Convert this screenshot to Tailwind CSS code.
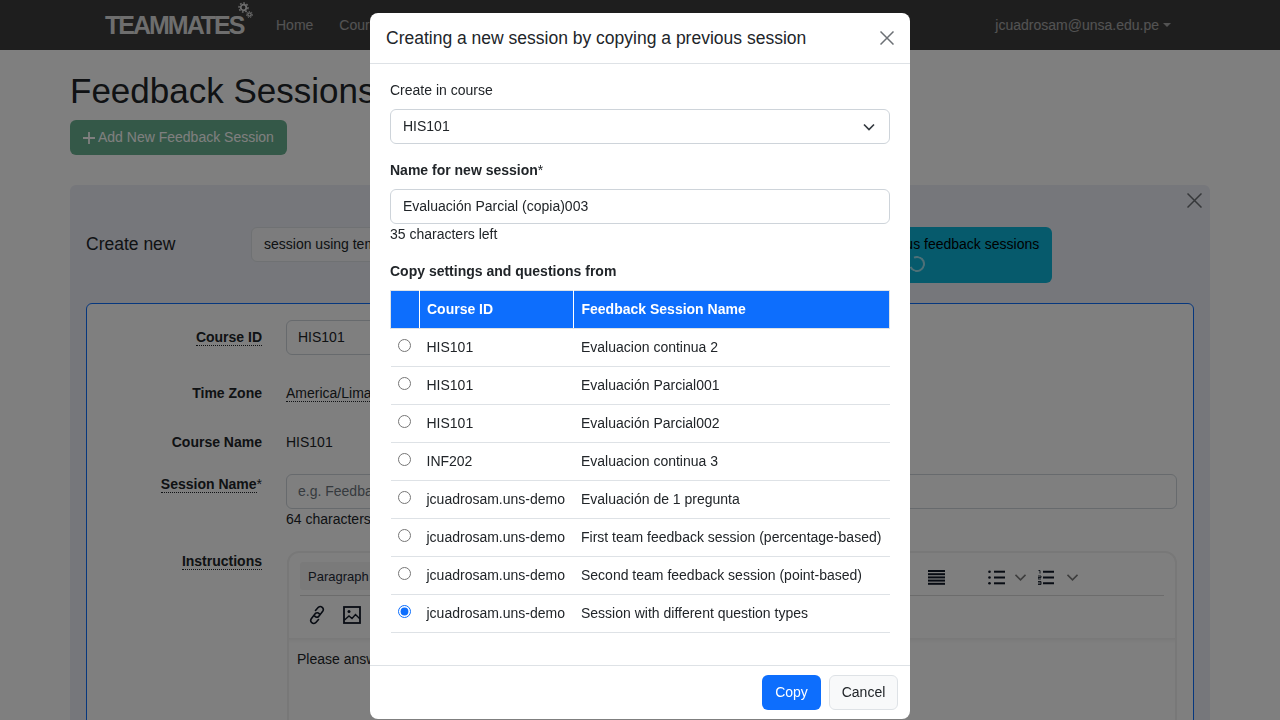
<!DOCTYPE html>
<html lang="en">
<head>
  <meta charset="UTF-8" />
  <title>TEAMMATES - Feedback Sessions</title>
  <script src="https://cdn.jsdelivr.net/npm/@tailwindcss/browser@4"></script>
</head>
<body class="h-screen overflow-hidden bg-white font-['Liberation_Sans',Arial,sans-serif] text-[14px] leading-[21px] text-[#212529]">

  <!-- navbar -->
  <nav class="flex h-[50px] items-center bg-[#3c3c3c] pl-[105px] pr-[109px]">
    <div class="relative w-[171px] text-[25px] leading-[30px] font-bold tracking-[-2px] text-[#dcdcdc]">
      TEAMMATES
      <svg class="absolute left-[133px] top-[-8px]" width="15" height="17" viewBox="0 0 15 17" fill="none" stroke="#dcdcdc">
        <circle cx="5.500" cy="5.500" r="2.800" stroke-width="1.800" />
        <circle cx="5.500" cy="5.500" r="4.500" stroke-width="1.400" stroke-dasharray="1.700 1.700" />
        <circle cx="11.500" cy="12.500" r="1.700" stroke-width="1.300" />
        <circle cx="11.500" cy="12.500" r="3" stroke-width="1" stroke-dasharray="1.300 1.300" />
      </svg>
    </div>
    <a class="text-white/55">Home</a>
    <a class="ml-[26px] text-white/55">Courses</a>
    <div class="ml-auto flex items-center text-white/55">
      jcuadrosam@unsa.edu.pe
      <span class="ml-[4px] h-0 w-0 border-x-[4px] border-t-[4px] border-x-transparent border-t-white/55"></span>
    </div>
  </nav>

  <!-- page behind the modal -->
  <main class="mx-[70px]">
    <h1 class="mt-[17px] h-[48px] text-[35px] leading-[48px] font-normal text-[#212529]">Feedback Sessions</h1>
    <button class="mt-[5px] flex h-[35px] w-[217px] items-center rounded-[6px] bg-[#69b190] pl-[13px] text-white">
      <svg class="mr-[3px]" width="12" height="12" viewBox="0 0 12 12" stroke="#ffffff" stroke-width="1.800"><path d="M6 0v12M0 6h12" /></svg>
      Add New Feedback Session
    </button>

    <section class="relative mt-[30px] h-[600px] rounded-[6px] bg-[#eceef6] px-[16px] pt-[42px]">
      <svg class="absolute right-[8px] top-[8px]" width="15" height="15" viewBox="0 0 15 15" stroke="#6c7075" stroke-width="1.500" fill="none"><path d="M0.500 0.500l14 14M14.500 0.500l-14 14" /></svg>

      <div class="flex items-start">
        <div class="flex h-[35px] w-[165px] items-center text-[17.5px]">Create new</div>
        <div class="flex h-[35px] w-[260px] items-center rounded-[6px] border border-[#dee2e6] bg-[#f8f9fa] px-[12px]">session using template</div>
        <div class="ml-auto mr-[142px] flex h-[56px] w-[266px] flex-col items-center rounded-[6px] bg-[#0cb5d8] pt-[7px] text-black">
          Copy from previous feedback sessions
          <span class="mr-[4px] mt-[1px] h-[16px] w-[16px] rotate-[20deg] rounded-full border-2 border-white/60 border-l-transparent"></span>
        </div>
      </div>

      <!-- new session form -->
      <div class="mt-[20px] h-[500px] rounded-[6px] border border-[#0d6efd] bg-white pr-[16px] pt-[16px]">
        <div class="flex h-[35px] items-center">
          <div class="w-[175px] text-right font-bold"><span class="border-b border-dotted border-[#212529]">Course ID</span></div>
          <div class="ml-[24px] flex h-[35px] w-[300px] items-center rounded-[6px] border border-[#ced4da] px-[11px]">HIS101</div>
        </div>
        <div class="mt-[28px] flex">
          <div class="w-[175px] text-right font-bold">Time Zone</div>
          <div class="ml-[24px]"><span class="border-b border-dotted border-[#212529]">America/Lima</span></div>
        </div>
        <div class="mt-[28px] flex">
          <div class="w-[175px] text-right font-bold">Course Name</div>
          <div class="ml-[24px]">HIS101</div>
        </div>
        <div class="mt-[21px] flex">
          <div class="w-[175px] text-right font-bold"><span class="border-b border-dotted border-[#212529]">Session Name</span><span class="font-normal">*</span></div>
          <div class="ml-[24px] flex-1">
            <div class="flex h-[35px] items-center rounded-[6px] border border-[#ced4da] px-[11px] text-[#6c757d]">e.g. Feedback for Project Presentation 1</div>
            <div>64 characters left</div>
          </div>
        </div>
        <div class="mt-[21px] flex">
          <div class="w-[175px] text-right font-bold"><span class="border-b border-dotted border-[#212529]">Instructions</span></div>
          <div class="ml-[25px] h-[300px] flex-1 rounded-[12px] border-2 border-[#f0f0f0]">
            <div class="mx-[11px] mt-[9px] h-[73px]">
              <div class="flex h-[34px] items-start border-b border-[#d8d8d8]">
                <div class="flex h-[28px] w-[120px] items-center rounded-[3px] bg-[#f4f4f4] pl-[8px] text-[13px] text-[#1f2a37]">Paragraph</div>
                <svg class="ml-[508px] mt-[8px]" width="17" height="15" viewBox="0 0 17 15" fill="#111827"><rect width="17" height="2" /><rect y="3.200" width="17" height="2" /><rect y="6.400" width="17" height="2" /><rect y="9.600" width="17" height="2" /><rect y="12.800" width="17" height="2" /></svg>
                <svg class="ml-[43px] mt-[8px]" width="17" height="15" viewBox="0 0 17 15" fill="#111827"><circle cx="1.500" cy="1.700" r="1.300" /><circle cx="1.500" cy="7.500" r="1.300" /><circle cx="1.500" cy="13.300" r="1.300" /><rect x="6" y="0.700" width="11" height="2" /><rect x="6" y="6.500" width="11" height="2" /><rect x="6" y="12.300" width="11" height="2" /></svg>
                <svg class="ml-[10px] mt-[12px]" width="11" height="7" viewBox="0 0 11 7" fill="none" stroke="#7c7c7c" stroke-width="1.600"><path d="M0.500 0.800l5 5 5-5" /></svg>
                <svg class="ml-[12px] mt-[8px]" width="16" height="15" viewBox="0 0 16 15" fill="none" stroke="#111827"><path d="M0.500 0.500h1.500v3M0 6h3v1.500h-3v1.500h3M0 11.500h3v3h-3M0 13h3" stroke-width="0.900" /><path d="M5 1.700h11M5 7.500h11M5 13.300h11" stroke-width="2" /></svg>
                <svg class="ml-[13px] mt-[12px]" width="11" height="7" viewBox="0 0 11 7" fill="none" stroke="#7c7c7c" stroke-width="1.600"><path d="M0.500 0.800l5 5 5-5" /></svg>
              </div>
              <div class="flex items-center pl-[8px] pt-[9px]">
                <svg width="18" height="20" viewBox="0 0 18 20" fill="none" stroke="#111827" stroke-width="1.600" stroke-linecap="round"><path d="M7.500 5.500l2.800-3.200a3 3 0 0 1 4.400 4l-4 5.200a3 3 0 0 1-4-.4" /><path d="M10.500 14.500l-2.800 3.200a3 3 0 0 1-4.400-4l4-5.200a3 3 0 0 1 4 .4" /></svg>
                <svg class="ml-[17px]" width="18" height="18" viewBox="0 0 18 18" fill="none" stroke="#111827" stroke-width="1.800"><rect x="1" y="1" width="16" height="16" /><path d="M1.500 14l4.500-4 3 2.500 3.500-4 4.500 4.500" stroke-width="1.400" /><circle cx="6" cy="5.500" r="1.500" fill="#111827" stroke="none" /></svg>
              </div>
            </div>
            <div class="mt-[3px] pl-[8px] pt-[11px] shadow-[inset_0_6px_6px_-6px_rgba(0,0,0,0.12)]">Please answer all the given questions.</div>
          </div>
        </div>
      </div>
    </section>
  </main>

  <!-- backdrop -->
  <div class="fixed inset-0 bg-black/50"></div>

  <!-- copy session modal -->
  <div class="fixed left-[370px] top-[13px] flex h-[706px] w-[540px] flex-col rounded-[8px] bg-white">
    <div class="flex h-[51px] items-center justify-between border-b border-[#dee2e6] pl-[16px] pr-[16px]">
      <h5 class="text-[17.5px] leading-[26px] text-[#212529]">Creating a new session by copying a previous session</h5>
      <svg width="14" height="14" viewBox="0 0 14 14" stroke="#6c7075" stroke-width="1.500" fill="none"><path d="M0.500 0.500l13 13M13.500 0.500l-13 13" /></svg>
    </div>

    <div class="flex-1 px-[20px] pt-[16px]">
      <div>Create in course</div>
      <div class="mt-[8px] flex h-[35px] items-center justify-between rounded-[6px] border border-[#ced4da] pl-[12px] pr-[14px]">
        HIS101
        <svg width="12" height="8" viewBox="0 0 12 8" fill="none" stroke="#343a40" stroke-width="1.700"><path d="M1 1.500l5 5 5-5" /></svg>
      </div>
      <div class="mt-[16px]"><span class="font-bold">Name for new session</span>*</div>
      <div class="mt-[8px] flex h-[35px] items-center rounded-[6px] border border-[#ced4da] px-[12px]">Evaluación Parcial (copia)003</div>
      <div>35 characters left</div>
      <div class="mt-[16px] font-bold">Copy settings and questions from</div>
      <table class="mt-[8px] w-full table-fixed border-collapse">
        <thead>
          <tr class="h-[38px] bg-[#0d6efd] text-left font-bold text-white">
            <th class="w-[29px] border border-[#dee2e6] border-r-white"></th>
            <th class="w-[154px] border border-y-[#dee2e6] border-x-white pl-[7px]">Course ID</th>
            <th class="border border-[#dee2e6] border-l-white pl-[7.5px]">Feedback Session Name</th>
          </tr>
        </thead>
        <tbody>
          <tr class="h-[38px] border-b border-[#dee2e6]"><td class="pl-[7px]"><input type="radio" name="s" class="mb-[4px] block" /></td><td class="pl-[7px]">HIS101</td><td class="pl-[7.5px]">Evaluacion continua 2</td></tr>
          <tr class="h-[38px] border-b border-[#dee2e6]"><td class="pl-[7px]"><input type="radio" name="s" class="mb-[4px] block" /></td><td class="pl-[7px]">HIS101</td><td class="pl-[7.5px]">Evaluación Parcial001</td></tr>
          <tr class="h-[38px] border-b border-[#dee2e6]"><td class="pl-[7px]"><input type="radio" name="s" class="mb-[4px] block" /></td><td class="pl-[7px]">HIS101</td><td class="pl-[7.5px]">Evaluación Parcial002</td></tr>
          <tr class="h-[38px] border-b border-[#dee2e6]"><td class="pl-[7px]"><input type="radio" name="s" class="mb-[4px] block" /></td><td class="pl-[7px]">INF202</td><td class="pl-[7.5px]">Evaluacion continua 3</td></tr>
          <tr class="h-[38px] border-b border-[#dee2e6]"><td class="pl-[7px]"><input type="radio" name="s" class="mb-[4px] block" /></td><td class="pl-[7px]">jcuadrosam.uns-demo</td><td class="pl-[7.5px]">Evaluación de 1 pregunta</td></tr>
          <tr class="h-[38px] border-b border-[#dee2e6]"><td class="pl-[7px]"><input type="radio" name="s" class="mb-[4px] block" /></td><td class="pl-[7px]">jcuadrosam.uns-demo</td><td class="pl-[7.5px]">First team feedback session (percentage-based)</td></tr>
          <tr class="h-[38px] border-b border-[#dee2e6]"><td class="pl-[7px]"><input type="radio" name="s" class="mb-[4px] block" /></td><td class="pl-[7px]">jcuadrosam.uns-demo</td><td class="pl-[7.5px]">Second team feedback session (point-based)</td></tr>
          <tr class="h-[38px] border-b border-[#dee2e6]"><td class="pl-[7px]"><input type="radio" name="s" class="mb-[4px] block accent-[#0d6efd]" checked /></td><td class="pl-[7px]">jcuadrosam.uns-demo</td><td class="pl-[7.5px]">Session with different question types</td></tr>
        </tbody>
      </table>
    </div>

    <div class="flex h-[54px] items-start justify-end gap-[8px] border-t border-[#dee2e6] pr-[12px] pt-[9px]">
      <button class="h-[35px] w-[59px] rounded-[6px] bg-[#0d6efd] text-white">Copy</button>
      <button class="h-[35px] w-[69px] rounded-[6px] border border-[#dee2e6] bg-[#f8f9fa] text-[#212529]">Cancel</button>
    </div>
  </div>

</body>
</html>
